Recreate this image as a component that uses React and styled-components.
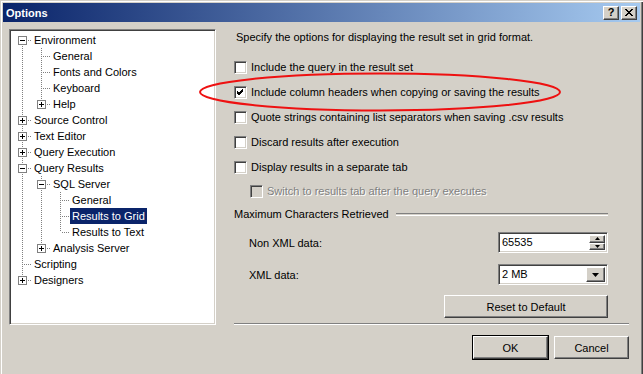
import React from 'react'
import styled, { createGlobalStyle, css } from 'styled-components'

const GlobalStyle = createGlobalStyle`
  html, body {
    margin: 0;
    padding: 0;
    background: #d4d0c8;
  }
  body {
    font-family: "Liberation Sans", Arial, sans-serif;
    font-size: 11px;
    color: #000;
  }
`

const sunken = css`
  border: 1px solid;
  border-color: #808080 #fff #fff #808080;
  box-shadow: inset 1px 1px #404040, inset -1px -1px #d4d0c8;
`

const raised = css`
  border: 1px solid;
  border-color: #fff #404040 #404040 #fff;
  box-shadow: inset -1px -1px #808080, inset 1px 1px #d4d0c8;
`

const Window = styled.div`
  position: relative;
  width: 643px;
  height: 374px;
  box-sizing: border-box;
  padding: 3px 3px 0 3px;
  background: #d4d0c8;
  box-shadow: inset 1px 1px #d4d0c8, inset 2px 2px #fff, inset -1px 0 #404040, inset -2px 0 #808080;
  overflow: hidden;
`

const TitleBar = styled.div`
  height: 19px;
  display: flex;
  align-items: center;
  padding: 0 3px;
  background: linear-gradient(to right, #0a246a, #a6caf0);
  color: #fff;
  font-weight: bold;
  font-size: 11px;
`

const Title = styled.span`
  flex: 1;
`

const CaptionButton = styled.button`
  ${raised};
  width: 16px;
  height: 14px;
  padding: 0;
  margin-left: ${p => (p.$gap ? '2px' : '0')};
  background: #d4d0c8;
  font-family: "Liberation Sans", Arial, sans-serif;
  font-weight: bold;
  font-size: 11px;
  line-height: 11px;
  color: #000;
  display: flex;
  align-items: center;
  justify-content: center;
`

const Body = styled.div`
  display: flex;
  gap: 18px;
  padding: 7px 0 0 6px;
`

const TreeBox = styled.div`
  ${sunken};
  width: 207px;
  height: 296px;
  box-sizing: border-box;
  background: #fff;
  padding: 2px 0 0 3px;
`

const TreeRow = styled.div`
  display: flex;
  height: 16px;
  align-items: center;
`

const Cell = styled.div`
  position: relative;
  width: 19px;
  height: 16px;
  flex: none;

  &::before {
    content: '';
    display: ${p => (p.$kind === 'blank' ? 'none' : 'block')};
    position: absolute;
    left: 9px;
    width: 1px;
    top: ${p => (p.$kind === 'first' ? '8px' : '0')};
    height: ${p => (p.$kind === 'ell' ? '8px' : p.$kind === 'first' ? '8px' : '16px')};
    background-image: linear-gradient(to bottom, #808080 50%, transparent 50%);
    background-size: 1px 2px;
  }

  &::after {
    content: '';
    display: ${p => (p.$kind === 'pipe' || p.$kind === 'blank' ? 'none' : 'block')};
    position: absolute;
    left: 10px;
    top: 8px;
    width: 9px;
    height: 1px;
    background-image: linear-gradient(to right, transparent 50%, #808080 50%);
    background-size: 2px 1px;
  }
`

const Expander = styled.div`
  position: absolute;
  left: 5px;
  top: 4px;
  width: 9px;
  height: 9px;
  box-sizing: border-box;
  border: 1px solid #808080;
  background: #fff;
  z-index: 1;

  &::before {
    content: '';
    position: absolute;
    left: 1px;
    top: 3px;
    width: 5px;
    height: 1px;
    background: #000;
  }

  &::after {
    content: '';
    display: ${p => (p.$open ? 'none' : 'block')};
    position: absolute;
    left: 3px;
    top: 1px;
    width: 1px;
    height: 5px;
    background: #000;
  }
`

const TreeLabel = styled.span`
  padding: 1px 2px;
  line-height: 14px;
  white-space: nowrap;
  background: ${p => (p.$selected ? '#0a246a' : 'transparent')};
  color: ${p => (p.$selected ? '#fff' : '#000')};
`

const RightPanel = styled.div`
  width: 396px;
  display: flex;
  flex-direction: column;
  padding-top: 1px;
`

const Description = styled.div`
  height: 14px;
  line-height: 14px;
  padding-left: 2px;
`

const OptionList = styled.div`
  display: flex;
  flex-direction: column;
  gap: 9px;
  margin-top: 15px;
`

const CheckRow = styled.label`
  display: flex;
  align-items: center;
  height: 16px;
  gap: 4px;
  padding-left: ${p => (p.$indent ? '16px' : '0')};
  margin-top: ${p => (p.$indent ? '-1px' : '0')};
  color: ${p => (p.$disabled ? '#808080' : '#000')};
  text-shadow: ${p => (p.$disabled ? '1px 1px #fff' : 'none')};
`

const Box = styled.span`
  ${sunken};
  width: 13px;
  height: 13px;
  box-sizing: border-box;
  background: ${p => (p.$disabled ? '#d4d0c8' : '#fff')};
  display: flex;
  align-items: center;
  justify-content: center;
  flex: none;
`

const GroupHeader = styled.div`
  display: flex;
  align-items: center;
  height: 14px;
  margin-top: 8px;
  margin-right: 22px;
`

const EtchedLine = styled.div`
  flex: 1;
  height: 1px;
  margin-left: 7px;
  border-top: 1px solid #808080;
  border-bottom: 1px solid #fff;
`

const FieldRow = styled.div`
  display: flex;
  align-items: center;
  height: 21px;
  margin-top: 11px;
  margin-right: 22px;
  padding-left: 15px;
`

const FieldLabel = styled.span`
  flex: 1;
`

const Field = styled.div`
  ${sunken};
  width: 110px;
  height: 21px;
  box-sizing: border-box;
  background: #fff;
  display: flex;
  align-items: stretch;
  padding: 2px 2px 2px 3px;
`

const FieldValue = styled.span`
  flex: 1;
  line-height: 15px;
`

const Spin = styled.div`
  width: 16px;
  display: flex;
  flex-direction: column;
`

const SpinButton = styled.div`
  ${raised};
  flex: 1;
  background: #d4d0c8;
  display: flex;
  align-items: center;
  justify-content: center;
`

const DropButton = styled.div`
  ${raised};
  width: 17px;
  background: #d4d0c8;
  display: flex;
  align-items: center;
  justify-content: center;
`

const PushButton = styled.button`
  ${raised};
  height: 23px;
  width: ${p => p.$width}px;
  padding: 0;
  background: #d4d0c8;
  font-family: "Liberation Sans", Arial, sans-serif;
  font-size: 11px;
  color: #000;
  ${p =>
    p.$default &&
    css`
      outline: 1px solid #000;
      outline-offset: 0;
    `}
`

const ResetRow = styled.div`
  display: flex;
  justify-content: flex-end;
  margin-top: 10px;
  margin-right: 22px;
`

const Separator = styled.div`
  height: 0;
  margin-top: 5px;
  margin-right: 1px;
  border-top: 1px solid #808080;
  border-bottom: 1px solid #fff;
`

const ButtonBar = styled.div`
  display: flex;
  justify-content: flex-end;
  gap: 6px;
  margin-top: 11px;
  margin-right: 1px;
`

const Highlight = styled.svg`
  position: absolute;
  left: 0;
  top: 0;
  pointer-events: none;
`

const tree = [
  {
    label: 'Environment',
    open: true,
    children: [
      { label: 'General' },
      { label: 'Fonts and Colors' },
      { label: 'Keyboard' },
      { label: 'Help', children: [] },
    ],
  },
  { label: 'Source Control', children: [] },
  { label: 'Text Editor', children: [] },
  { label: 'Query Execution', children: [] },
  {
    label: 'Query Results',
    open: true,
    children: [
      {
        label: 'SQL Server',
        open: true,
        children: [
          { label: 'General' },
          { label: 'Results to Grid', selected: true },
          { label: 'Results to Text' },
        ],
      },
      { label: 'Analysis Server', children: [] },
    ],
  },
  { label: 'Scripting' },
  { label: 'Designers', children: [] },
]

const flatten = (nodes, guides = [], root = true) =>
  nodes.flatMap((node, i) => {
    const last = i === nodes.length - 1
    let kind = last ? 'ell' : 'tee'
    if (root && i === 0) kind = 'first'
    const row = { ...node, guides, kind }
    const kids = node.open ? flatten(node.children, [...guides, !last], false) : []
    return [row, ...kids]
  })

const rows = flatten(tree)

const Check = () => (
  <svg width="7" height="7" viewBox="0 0 7 7">
    <path d="M0 2 L2 4 L6 0 M0 3 L2 5 L6 1 M0 4 L2 6 L6 2" stroke="#000" strokeWidth="1" fill="none" shapeRendering="crispEdges" />
  </svg>
)

const Arrow = ({ up, size = 7 }) => (
  <svg width={size} height={Math.ceil(size / 2)} viewBox={`0 0 ${size} ${Math.ceil(size / 2)}`}>
    <polygon
      points={up ? `0,${Math.ceil(size / 2)} ${size},${Math.ceil(size / 2)} ${size / 2},0` : `0,0 ${size},0 ${size / 2},${Math.ceil(size / 2)}`}
      fill="#000"
    />
  </svg>
)

const options = [
  { label: 'Include the query in the result set' },
  { label: 'Include column headers when copying or saving the results', checked: true },
  { label: 'Quote strings containing list separators when saving .csv results' },
  { label: 'Discard results after execution' },
  { label: 'Display results in a separate tab' },
  { label: 'Switch to results tab after the query executes', disabled: true },
]

const App = () => (
  <Window>
    <GlobalStyle />
    <TitleBar>
      <Title>Options</Title>
      <CaptionButton>?</CaptionButton>
      <CaptionButton $gap>
        <svg width="8" height="7" viewBox="0 0 8 7">
          <path d="M0 0 L7 7 M1 0 L8 7 M7 0 L0 7 M8 0 L1 7" stroke="#000" strokeWidth="1" />
        </svg>
      </CaptionButton>
    </TitleBar>
    <Body>
      <TreeBox>
        {rows.map((row, i) => (
          <TreeRow key={i}>
            {row.guides.map((g, j) => (
              <Cell key={j} $kind={g ? 'pipe' : 'blank'} />
            ))}
            <Cell $kind={row.kind}>
              {row.children && <Expander $open={row.open} />}
            </Cell>
            <TreeLabel $selected={row.selected}>{row.label}</TreeLabel>
          </TreeRow>
        ))}
      </TreeBox>
      <RightPanel>
        <Description>Specify the options for displaying the result set in grid format.</Description>
        <OptionList>
          {options.map(opt => (
            <CheckRow key={opt.label} $indent={opt.disabled} $disabled={opt.disabled}>
              <Box $disabled={opt.disabled}>{opt.checked && <Check />}</Box>
              {opt.label}
            </CheckRow>
          ))}
        </OptionList>
        <GroupHeader>
          Maximum Characters Retrieved
          <EtchedLine />
        </GroupHeader>
        <FieldRow>
          <FieldLabel>Non XML data:</FieldLabel>
          <Field>
            <FieldValue>65535</FieldValue>
            <Spin>
              <SpinButton>
                <Arrow up size={5} />
              </SpinButton>
              <SpinButton>
                <Arrow size={5} />
              </SpinButton>
            </Spin>
          </Field>
        </FieldRow>
        <FieldRow>
          <FieldLabel>XML data:</FieldLabel>
          <Field>
            <FieldValue>2 MB</FieldValue>
            <DropButton>
              <Arrow size={7} />
            </DropButton>
          </Field>
        </FieldRow>
        <ResetRow>
          <PushButton $width={164}>Reset to Default</PushButton>
        </ResetRow>
        <Separator />
        <ButtonBar>
          <PushButton $width={75} $default>
            OK
          </PushButton>
          <PushButton $width={75}>Cancel</PushButton>
        </ButtonBar>
      </RightPanel>
    </Body>
    <Highlight width="643" height="374">
      <ellipse cx="380" cy="92" rx="180" ry="18.5" fill="none" stroke="#ee1111" strokeWidth="2" />
    </Highlight>
  </Window>
)

export default App
